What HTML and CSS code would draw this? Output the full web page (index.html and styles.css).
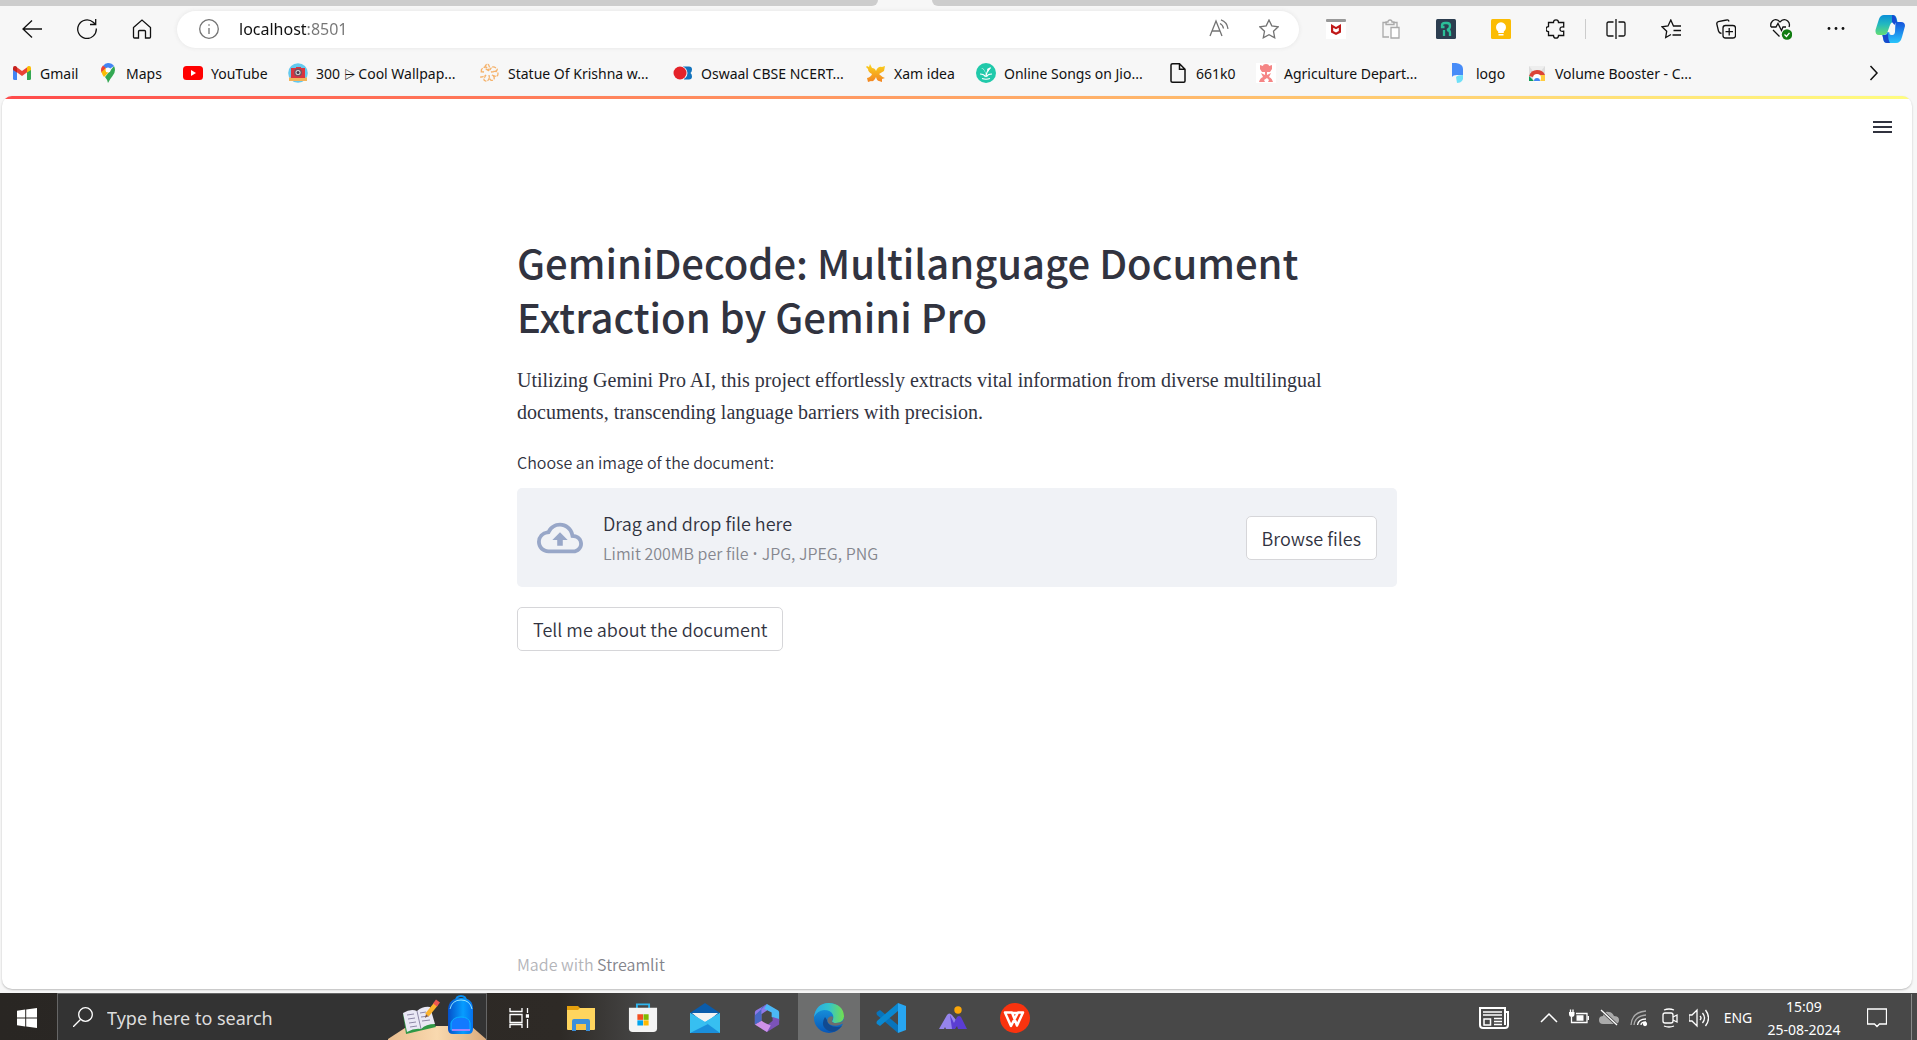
FILE: index.html
```html
<!DOCTYPE html>
<html lang="en">
<head>
<meta charset="utf-8">
<meta name="viewport" content="width=device-width, initial-scale=1">
<title>GeminiDecode</title>
<link rel="stylesheet" href="styles.css">
</head>
<body>
<header class="browser">
  <div class="tabstrip"><span class="tabs-left"></span><span class="tabs-right"></span></div>
  <nav class="toolbar" aria-label="Browser">
    <button class="tool" aria-label="Back"><svg class="i20" viewBox="0 0 20 20"><path d="M20 10H1M10 1.500L1 10l9 8.500"/></svg></button>
    <button class="tool" aria-label="Refresh"><svg class="i20" viewBox="0 0 20 20"><path d="M19.300 9.500A9.300 9.300 0 1 1 16.200 3.200L18.500 5.200M18.700 0V5.500H13"/></svg></button>
    <button class="tool" aria-label="Home"><svg class="i20" viewBox="0 0 20 20"><path d="M1.500 8.500L10 1l8.500 7.500V18a1 1 0 0 1-1 1H13.500V12.500q0-1-1-1h-5q-1 0-1 1V19h-4a1 1 0 0 1-1-1z"/></svg></button>
    <div class="address">
      <svg class="i20 muted" viewBox="0 0 20 20"><circle cx="10" cy="10" r="9.300"/><path d="M10 9v6M10 5.300v1.500"/></svg>
      <input class="url" type="text" aria-label="Address" value="localhost:8501">
      <button class="inner" aria-label="Read aloud"><svg class="i20 muted" viewBox="0 0 20 20"><path d="M1 17L7 2l6 15M3.300 12h7.500M11 4.500q3 1.500 3.500 5M12 .8q6 2 7 9"/></svg></button>
      <button class="inner" aria-label="Add to favorites"><svg class="i20 muted" viewBox="0 0 20 20"><path d="M10 1l2.800 5.900 6.400.9-4.700 4.500 1.200 6.500L10 15.700l-5.700 3.100 1.200-6.500L.8 7.800l6.400-.9z"/></svg></button>
    </div>
    <button class="tool first-ext" aria-label="McAfee"><svg class="i20 fill" viewBox="0 0 20 20"><path fill="#fff" d="M0 0h20v20H0z"/><rect width="20" height="3" rx="1" fill="#999"/><path fill="#c01818" d="M5 5l5 3 5-3v8.500L10 16l-5-2.500z"/><path fill="#fff" d="M7.200 8.700L10 10.200l2.800-1.500V12L10 13.500 7.200 12z"/></svg></button>
    <button class="tool" aria-label="Clipboard"><svg class="i20 pale" viewBox="0 0 20 20"><path d="M8 18H2V3.500h4M12 3.500h4V8M5 5.500V3h2q0-2 2-2t2 2h2v2.500z"/><path fill="#fff" d="M10 8.500h8V19h-8z"/></svg></button>
    <button class="tool" aria-label="R extension"><svg class="i20 fill" viewBox="0 0 20 20"><rect width="20" height="20" rx="1.500" fill="#2c3e50"/><path d="M8.500 8H6V6.500Q6 4 9 4h2q3 0 3 3t-3 4q3 0 3 3v3M8 11v6" fill="none" stroke="#2bbf98" stroke-width="2.300"/></svg></button>
    <button class="tool" aria-label="Keep"><svg class="i20 fill" viewBox="0 0 20 20"><rect width="20" height="20" rx="1.500" fill="#fbbc04"/><path fill="#fff" d="M7.200 12.500a5 5 0 1 1 5.600 0V14H7.200zM7.500 15h5v1.500h-5z"/></svg></button>
    <button class="tool" aria-label="Extensions"><svg class="i20" viewBox="0 0 20 20"><path d="M2.500 3.500h5Q7.500.8 10 .8t2.500 2.700h5.200V8q-3.700-.5-3.700 2.200t3.700 2V16.500h-5.200q0 2.700-2.500 2.700t-2.500-2.700h-5V12.700Q0 12.500 0 10.200T2.500 7.700z"/></svg></button>
    <span class="divider"></span>
    <button class="tool" aria-label="Split screen"><svg class="i20" viewBox="0 0 20 20"><path d="M7.500 17H2.500q-1.500 0-1.500-1.500v-11Q1 3 2.500 3h5M12.500 3h5Q19 3 19 4.500v11q0 1.500-1.500 1.500h-5M10 0v20"/></svg></button>
    <button class="tool" aria-label="Favorites"><svg class="i20" viewBox="0 0 20 20"><path d="M10 15.500l-5.300 3 1-6.300L1 7.800l6-.8 2.800-6L12.500 7H20M12.500 11.500H20M11.500 16H20"/></svg></button>
    <button class="tool" aria-label="Collections"><svg class="i20" viewBox="0 0 20 20"><path d="M5.500 14.500q-2.500-.5-3-2.500L.8 5Q.5 3.200 2.300 2.700L10.500 1q2-.5 2.500 1.500"/><rect x="7" y="6.500" width="12.500" height="12.500" rx="2.500"/><path d="M13.200 9v7.500M9.500 12.700H17"/></svg></button>
    <button class="tool" aria-label="Browser essentials"><svg class="i22" viewBox="0 0 22 22"><path d="M1 9Q0 5.500 2.500 3T8 2.300L10 4l2-1.700Q15 .5 17.700 3T19 9M1 9h5l2-3.500 3.500 7L13 9h3M3 12l6.500 6.500"/><circle cx="17" cy="16.500" r="5.200" fill="#107c10" stroke="none"/><path stroke="#fff" d="M14.500 16.500l2 2 3-3.700"/></svg></button>
    <button class="tool" aria-label="Settings and more"><svg class="i20 fill" viewBox="0 0 20 20"><circle cx="3" cy="9.500" r="1.400"/><circle cx="10" cy="9.500" r="1.400"/><circle cx="17" cy="9.500" r="1.400"/></svg></button>
    <button class="tool copilot" aria-label="Copilot"><svg class="i30 fill" viewBox="0 0 30 28"><defs><linearGradient id="ca" x1="0" y1="0" x2="0" y2="1"><stop stop-color="#0b8fd8"/><stop offset=".45" stop-color="#22b8c0"/><stop offset="1" stop-color="#64dd74"/></linearGradient><linearGradient id="cb" x1="0" y1="0" x2="0" y2="1"><stop stop-color="#1553dc"/><stop offset="1" stop-color="#28c5fb"/></linearGradient></defs><path fill="url(#ca)" d="M9 0h9q2.500 0 3.500 3l1 4H19q-3 0-4 3l-2.500 7q-1 3-4 3H4Q0 20 .5 15L4 4Q5.500 0 9 0z"/><path fill="url(#cb)" d="M20.500 7H26q4 0 4 4l-3 11q-1.500 6-6 6h-9q-3 0-3.500-3L7.300 20h2.200q2 0 3-3l2 .5q-.5 2.500 2 2.500h1q2 0 2.500-3z"/><path fill="#164bd3" d="M17 0q3 0 4 3l1 4q-2 .5-2.500 3L17 7z"/><path fill="#1949cb" d="M7.500 20h3q2 0 2.500-2 0 7 2 10h-3q-3 0-3.500-3z"/></svg></button>
  </nav>
  <nav class="bookmarks" aria-label="Bookmarks">
    <a href="#"><svg class="i20 fill" viewBox="0 0 20 20"><path fill="#4285f4" d="M1 6l4 3v8H2.500Q1 17 1 15.500z"/><path fill="#34a853" d="M19 6l-4 3v8h2.500q1.500 0 1.500-1.500z"/><path fill="#ea4335" d="M4.500 4L10 8l5.500-4v5L10 13 4.500 9z"/><path fill="#c5221f" d="M1 7V5q0-2.500 2.500-2L5 4v5.500z"/><path fill="#fbbc04" d="M19 7V5q0-2.500-2.500-2L15 4v5.500z"/></svg>Gmail</a>
    <a href="#"><svg class="i20 fill" viewBox="0 0 20 20"><path fill="#34a853" d="M17 7q0 3-2.500 6T10 20q-1-4-3-6L16 3q1 2 1 4z"/><path fill="#4285f4" d="M10 0q4 0 6 3L10 7 5 3q2-3 5-3z"/><path fill="#ea4335" d="M5 2.500L8 5l-4 5q-1-1-1-3 0-2.500 2-4.500z"/><path fill="#fbbc04" d="M3.500 9L8 5l3 4-5 5q-1.500-1.500-2.500-5z"/><circle cx="10" cy="7" r="2.500" fill="#fff"/></svg>Maps</a>
    <a href="#"><svg class="i20 fill" viewBox="0 0 20 20"><rect y="3" width="20" height="14" rx="3.500" fill="#f00"/><path fill="#fff" d="M8 7l5 3-5 3z"/></svg>YouTube</a>
    <a href="#"><svg class="i20 fill" viewBox="0 0 20 20"><circle cx="10" cy="10" r="9.800" fill="#64c9ee"/><path fill="#f2b35b" d="M1 14.500h18V18H1z"/><path fill="#d9343f" d="M3 5h5V4h5v1h4v10H3z"/><circle cx="10" cy="9.500" r="4" fill="#775260"/><circle cx="10" cy="9.500" r="2.500" fill="#ddd"/><circle cx="10" cy="9.500" r="1.500" fill="#44384c"/></svg><span>300 <span class="symbol">⩥</span> Cool Wallpap...</span></a>
    <a href="#"><svg class="i20" viewBox="0 0 20 20"><path stroke="#f5b26b" stroke-dasharray="4 1" d="M9 8Q3 5 6 2t4 5q2-5 6-2t-5 4q7-2 7 2t-6 1q4 3 1 5t-4-5q1 6-3 6t0-6q-6 4-7 0t5-3Q-1 8 3 5t6 3"/></svg>Statue Of Krishna w...</a>
    <a href="#"><svg class="i20 fill" viewBox="0 0 20 20"><path fill="#1273bd" d="M10 3.500h6q3 0 3 3 0 2-1.500 3.500Q19 11 19 13.500q0 3-3 3h-5z"/><ellipse cx="7" cy="10" rx="7.500" ry="7" fill="#f7f7f7"/><circle cx="7" cy="10" r="6.500" fill="#e42229"/></svg>Oswaal CBSE NCERT...</a>
    <a href="#"><svg class="i20 fill" viewBox="0 0 20 20"><defs><linearGradient id="xa" x2="0" y2="1"><stop stop-color="#fad51c"/><stop offset="1" stop-color="#f38423"/></linearGradient></defs><path fill="url(#xa)" d="M1 3l2 1 1-3 2 4q3 0 4 3 2-5 6-4l3-1-1 5-5 3q3 3 6 4l-3 1v3l-3-1q-2 0-3-4-2 5-5 4l-3 1-1-4q4-1 5-4Q2 9 2 6L0 4z"/></svg>Xam idea</a>
    <a href="#"><svg class="i20 fill" viewBox="0 0 20 20"><circle cx="10" cy="10" r="10" fill="#20c9aa"/><path fill="none" stroke="#fff" stroke-width="1.200" d="M10 13q1-6 4.500-8M9.500 14Q8 11 4 11M10.500 14q1-3 5.500-3M6 15.500q4 1.500 8 0"/><path fill="#fff" d="M5 5q4 1 5 8 0-5-3-7.500zM11 6l4-2-3 5z"/></svg>Online Songs on Jio...</a>
    <a href="#"><svg class="i20" viewBox="0 0 20 20"><path d="M4.500.8h7L17 6.300V18q0 1.200-1.200 1.200H4.500Q3 19.200 3 18V2Q3 .8 4.500.8zM11.500 1v5.300H17" stroke-width="1.500"/></svg>661k0</a>
    <a href="#"><svg class="i20 fill" viewBox="0 0 20 20"><path fill="#fff" d="M0 0h20v20H0z"/><path fill="#f58585" d="M4 2l3 1q0-2 3-2t3 2l3-1v4l-2 3h-3v3l4-2-2 4q3 1 4 5h-5l1-2-2-2-3 2 1 2H3q1-4 4-5l-2-4 4 2V9H6L4 6z"/></svg>Agriculture Depart...</a>
    <a href="#"><svg class="i20 fill" viewBox="0 0 20 20"><path fill="#478cf8" d="M4 0h4q7 1 7 6v6H9q-4 0-5 2z"/><path fill="#6fe0f8" d="M8 14q1-2 7-2 1 8-6 8z"/></svg>logo</a>
    <a href="#"><svg class="i20 fill" viewBox="0 0 20 20"><path fill="#ddd" d="M2 3h16v15H2z"/><path fill="#eee" d="M2 3h16L14 8H6z"/><path fill="#db4437" d="M2 13q2-6 8-6t8 5l-8 3z"/><path fill="#0f9d58" d="M2 13l5 5H2z"/><path fill="#ffcd40" d="M11 18l2-6h5v6z"/><circle cx="10" cy="15" r="4" fill="#fff"/><path fill="#4285f4" d="M7 18a3 3 0 1 1 6 0z"/></svg>Volume Booster - C...</a>
    <button class="more" aria-label="More bookmarks"><svg class="i20" viewBox="0 0 20 20"><path d="M6.500 3l6.500 7-6.500 7" stroke-width="1.500"/></svg></button>
  </nav>
</header>

<div class="viewport">
  <div class="page">
    <button class="menu" aria-label="Main menu"><span></span><span></span><span></span></button>
    <main class="content">
      <h1>GeminiDecode: Multilanguage Document Extraction by Gemini Pro</h1>
      <p class="intro">Utilizing Gemini Pro AI, this project effortlessly extracts vital information from diverse multilingual documents, transcending language barriers with precision.</p>
      <label class="field-label" for="file">Choose an image of the document:</label>
      <input class="file-input" id="file" type="file" accept=".jpg,.jpeg,.png">
      <section class="dropzone">
        <svg class="cloud" viewBox="0 0 24 24"><path d="M19.350 10.040A7.490 7.490 0 0 0 12 4C9.110 4 6.600 5.640 5.350 8.040A5.994 5.994 0 0 0 0 14c0 3.310 2.690 6 6 6h13c2.760 0 5-2.240 5-5 0-2.640-2.050-4.780-4.650-4.960zM19 18H6c-2.210 0-4-1.790-4-4 0-2.050 1.530-3.760 3.560-3.970l1.070-.110.500-.950A5.469 5.469 0 0 1 12 6c2.620 0 4.880 1.860 5.390 4.430l.300 1.500 1.530.110A2.980 2.980 0 0 1 22 15c0 1.650-1.350 3-3 3zM8 13h2.550v3h2.900v-3H16l-4-4z"/></svg>
        <div class="drop-text"><span>Drag and drop file here</span><small>Limit 200MB per file <span class="bullet">•</span> JPG, JPEG, PNG</small></div>
        <button class="btn">Browse files</button>
      </section>
      <button class="btn submit">Tell me about the document</button>
    </main>
    <footer class="credit">Made with <a href="#">Streamlit</a></footer>
  </div>
</div>

<div class="taskbar">
  <button class="start" aria-label="Start"><svg class="i20 fill" viewBox="0 0 20 20"><path fill="#fff" d="M0 2.700L8.200 1.500v8H0zM9.200 1.400L20 0v9.500H9.200zM0 10.500h8.200v8L0 17.300zM9.200 10.500H20V20L9.200 18.600z"/></svg></button>
  <div class="search">
    <svg class="i20 white" viewBox="0 0 20 20"><circle cx="12.500" cy="7.500" r="6.800"/><path d="M7.500 12.500L0 20"/></svg>
    <input type="text" aria-label="Search" placeholder="Type here to search">
    <svg class="art" viewBox="0 0 98 45"><defs><linearGradient id="bp"><stop stop-color="#044fc9"/><stop offset=".6" stop-color="#079dff"/><stop offset="1" stop-color="#0571ee"/></linearGradient><linearGradient id="ds"><stop stop-color="#e9bd8f"/><stop offset=".5" stop-color="#f9d9af"/><stop offset="1" stop-color="#dbab7c"/></linearGradient></defs><path fill="url(#ds)" d="M0 44L20 31h63l15 13v1H0z"/><path fill="#2f9846" d="M15 19l3 20 30-7-3-6z"/><path fill="#e9e8f5" d="M15 18q8-5 14-2 6-5 13-4l5 17q-9 0-14 5-7-1-14 3z"/><path fill="none" stroke="#8d88a7" d="M29 16l4 18M19 20l7-1M20 24l7-1M21 28l7-1M22 32l7-1M32 18l6-1M33 22l8-1M34 26l8-1"/><path stroke="#fbb32c" stroke-width="4.500" d="M39 20L48 9"/><path stroke="#ee5750" stroke-width="5" d="M47 10l3-4"/><path fill="#875738" d="M37 23l1-4 2 2z"/><path fill="none" stroke="#078ff2" stroke-width="2" d="M68 6q0-5 5-5t5 5"/><path fill="url(#bp)" d="M60 14Q61 3 73 3t12 11v20q0 5-5 5H65q-5 0-5-5z"/><path fill="none" stroke="#8fe3ff" d="M62 14q2-9 11-9t11 9"/><path fill="#127aff" stroke="#06b5ff" d="M63 35V28q2-6 10-6t9 6v7z"/><path stroke="#d17cff" stroke-width="1.500" d="M64 35h18"/></svg>
  </div>
  <div class="apps">
    <button aria-label="Task view"><svg class="i20 white" viewBox="0 0 20 20"><path d="M1 0v3.500h12V0M1 6.500h12v8H1zM1 20v-3.500h12V20M18.500 0v5M18.500 11v9"/><path fill="#fff" d="M17.500 7h2v2h-2z"/></svg></button>
    <button aria-label="File Explorer"><svg class="i28 fill" viewBox="0 0 28 28"><path fill="#e5a00d" d="M0 2h11l2 2v4H0z"/><path fill="#ffd55e" d="M0 6h11l2-2h15v21q0 1-1 1H1q-1 0-1-1z"/><path fill="#3b8fda" d="M5 27V17q0-2 2-2h14q2 0 2 2v10h-4v-7H9v7z"/><path fill="#f6c447" d="M9 20h10v6H9z"/></svg></button>
    <button aria-label="Store"><svg class="i30 fill" viewBox="0 0 30 32"><path fill="none" stroke="#2fb5ee" stroke-width="2" d="M8.500 7V1.500h13V7"/><path fill="#f4f4f4" d="M0 5h30v22q0 4-4 4H4q-4 0-4-4z"/><path fill="#f25022" d="M9 12h6v6H9z"/><path fill="#7fba00" d="M15.500 12h5.500v6h-5.500z"/><path fill="#00a4ef" d="M9 18.500h6V24H9z"/><path fill="#ffb900" d="M15.500 18.500H21V24h-5.500z"/></svg></button>
    <button aria-label="Mail"><svg class="i30 fill" viewBox="0 0 30 30"><path fill="#0a5cab" d="M0 10L15 0l15 10-15 10z"/><path fill="#f3f3f3" d="M2 10h26L15 21z"/><path fill="#37bff1" d="M0 10l15 9 15-9v20H0z"/><path fill="#37bff1" d="M15 19l15 11V10z"/><path fill="#1a8fdb" d="M0 30h30L15 19z"/><path fill="#37bff1" d="M0 30V10l15 9 3 2z"/></svg></button>
    <button aria-label="Microsoft 365"><svg class="i28 fill" viewBox="0 0 28 30"><path fill="#8f78e8" d="M14 0L2 7q-1 1-1 2v13l7-4v-7l6-4z"/><path fill="#4bb8f6" d="M14 0l12 7q1 1 1 2v9l-8-4V9l-8-4z"/><path fill="#7b53b8" d="M27 16v6l-13 8-5-3 11-9v-4z"/><path fill="#cf91e9" d="M1 22l7-4 5 3 5 2-4 7z"/><path fill="#4868c5" d="M14 0L8 4v14l-7 4V12z"/></svg></button>
    <button class="active" aria-label="Edge"><svg class="i30 fill" viewBox="0 0 30 30"><defs><linearGradient id="eg"><stop stop-color="#28a9e8"/><stop offset=".5" stop-color="#34c4cb"/><stop offset="1" stop-color="#74df4c"/></linearGradient><linearGradient id="eb" x2="0" y2="1"><stop stop-color="#1b9de2"/><stop offset="1" stop-color="#0756b8"/></linearGradient></defs><circle cx="15" cy="15" r="15" fill="url(#eb)"/><path fill="url(#eg)" d="M0 14Q2 0 15 0q14 1 15 13 0 7-8 7-4 0-4-2 2-2 1-6-2-5-9-5-7 1-10 7z"/><path fill="#114a91" d="M11 14q-5 8 2 13 7 5 15-4-2 1-5 1-9 0-10-7z"/><path fill="#6d6e6e" d="M14 15q-2 5 3 7 6 2 11-1l2-1v-4q-1 4-8 4-4 0-4-2 1-2 1-4-2-2-5 1z"/></svg></button>
    <button aria-label="Visual Studio Code"><svg class="i30 fill" viewBox="0 0 30 30"><path fill="#0874bc" d="M1 9l3-2 18 15v8L1 12q-1-2 0-3z"/><path fill="#0a88d1" d="M1 21l3 2L22 8V0L1 18q-1 2 0 3z"/><path fill="#27a6f2" d="M22 0l8 3v24l-8 3z"/></svg></button>
    <button aria-label="Mi"><svg class="i28 fill" viewBox="0 0 28 24"><path fill="#9584ec" d="M0 23L8 9q2-3 5 0l4 5-4 9H7l-1-2-1 2z"/><path fill="#5b3dd3" d="M11 9l4 8 3-6q2-2 4 0l6 12h-9l-1-3-2 3h-3z"/><circle cx="19" cy="4" r="3.700" fill="#fba608"/></svg></button>
    <button aria-label="WPS Office"><svg class="i30 fill" viewBox="0 0 30 30"><circle cx="15" cy="15" r="15" fill="#f9330f"/><path fill="none" stroke="#fff" stroke-width="2.500" stroke-linejoin="round" d="M5 9.500h7l5 13 6-13h-5L11 23zM13 10h5"/></svg></button>
  </div>
  <div class="tray">
    <button class="news" aria-label="News"><svg class="i30 white" viewBox="0 0 30 22"><path stroke-width="2" d="M26 5h3v13q0 3-3 3H4q-3 0-3-3V1h25v17"/><path stroke-width="1.500" d="M4 5h19M4 8h19M15 11.500h8M15 14.500h8M15 17.500h8M5 12h6.500v6H5z"/></svg></button>
    <button aria-label="Show hidden icons"><svg class="i20 white" viewBox="0 0 20 20"><path d="M2 14l8-8 8 8" stroke-width="1.500"/></svg></button>
    <button aria-label="Battery"><svg class="i20 white" viewBox="0 0 20 20"><path d="M5 14.500h13v-9H7M19.500 8v4M2.500 9v5.500h3M1.500 1.500V4M4 1.500V4"/><path fill="#fff" stroke="none" d="M0 4h5.500v2q0 3-2.700 3T0 6zM7.500 7.200h7v5.600h-7z"/></svg></button>
    <button aria-label="OneDrive"><svg class="i20 fill" viewBox="0 0 20 20"><path fill="#aaa" d="M4 16q-4 0-4-4t4-4q1-5 6-4 3 0 5 4 5 0 5 4t-4 4z"/><path stroke="#484848" stroke-width="3" d="M2 2l16 15"/><path stroke="#fff" d="M2 2l16 15"/></svg></button>
    <button aria-label="Network"><svg class="i20 white" viewBox="0 0 20 20"><path stroke="#aaa" d="M2 17Q3 4 17 3M5 17Q6 8 17 7"/><path d="M8.500 17q1-6 8.500-6M12 17q0-3 5-3"/><circle cx="16" cy="16" r="1.500" fill="#fff"/></svg></button>
    <button aria-label="Meet now"><svg class="i20 white" viewBox="0 0 20 20"><rect x="4" y="5" width="10" height="10" rx="2"/><path d="M14 9l4-2v7l-4-2M5 2q5-2 10 0M5 18q5 2 10 0"/></svg></button>
    <button aria-label="Volume"><svg class="i20 white" viewBox="0 0 20 20"><path d="M0 7h3l5-5v16l-5-5H0zM11 8q2 2 0 4M13.500 5q4 5 0 10M16.500 2q6 8 0 16"/></svg></button>
    <span class="lang">ENG</span>
    <time class="clock" datetime="2024-08-25T15:09"><span>15:09</span><span>25-08-2024</span></time>
    <button class="notify" aria-label="Notifications"><svg class="i20 white" viewBox="0 0 20 20"><path d="M.5 1h19v15h-7L10 18.500 7.500 16h-7z"/></svg></button>
  </div>
</div>
</body>
</html>
```

FILE: styles.css
```css
* { box-sizing: border-box; }

:root {
  --ui: "Noto Sans", "Open Sans", sans-serif;
  --app: "Noto Sans CJK SC", "Noto Sans", sans-serif;
  --ink: #31333f;
}

body {
  margin: 0;
  min-height: 100vh;
  display: flex;
  flex-direction: column;
  background: #f7f7f7;
  font-family: var(--ui);
  overflow-x: hidden;
}

button {
  font: inherit;
  color: inherit;
  border: 0;
  padding: 0;
  background: none;
}

a { color: inherit; text-decoration: none; }

svg { display: block; flex: none; fill: none; stroke: #111; stroke-width: 1.300; }
svg.fill { fill: #111; stroke: none; }
svg.muted { stroke: #737373; }
svg.pale { stroke: #aaa; }
svg.white { stroke: #fff; }
.i20 { width: 20px; height: 20px; }
.i22 { width: 22px; height: 22px; }
.i28 { width: 28px; height: 28px; }
.i30 { width: 30px; height: 30px; }

/* Browser chrome */
.tabstrip { display: flex; gap: 54px; height: 6px; }
.tabs-left { flex: 46 1 0; background: #cdcdcd; border-bottom-right-radius: 6px; }
.tabs-right { flex: 51.600 1 0; background: #cdcdcd; border-bottom-left-radius: 6px; }

.toolbar { display: flex; align-items: center; padding: 4px 1px 2px 4px; }
.tool { display: grid; place-items: center; width: 55px; height: 38px; flex: none; }
.copilot { width: 53px; }
.first-ext { margin-left: 9px; }
.divider { width: 1px; height: 20px; margin: 0 2px; background: #ccc; }

.address {
  flex: 1;
  display: flex;
  align-items: center;
  height: 37px;
  margin-left: 8px;
  padding: 0 20px 0 22px;
  border-radius: 19px;
  background: #fff;
  box-shadow: 0 0 4px #e4e4e4;
}
.url {
  flex: 1;
  min-width: 0;
  height: 30px;
  margin-left: 20px;
  padding: 0;
  border: 0;
  outline: 0;
  font: 16px/30px var(--ui);
  color: transparent;
  caret-color: #111;
  background: linear-gradient(90deg, #111 68px, #757575 68px);
  background-clip: text;
  -webkit-background-clip: text;
}
.inner { margin-left: 30px; }

.bookmarks {
  display: grid;
  grid-template-columns: 86px 85px 105px 192px 193px 193px 110px 192px 88px 192px 79px 1fr 86px;
  align-items: center;
  height: 46px;
  padding-left: 12px;
  font-size: 14px;
  color: #111;
}
.bookmarks a { display: flex; align-items: center; gap: 8px; white-space: nowrap; }
.symbol { font-family: "DejaVu Sans", sans-serif; }
.more { justify-self: center; }

/* Page frame */
.viewport { flex: 1; display: flex; padding: 0 5px 4px 2px; }
.page {
  flex: 1;
  display: flex;
  flex-direction: column;
  border-radius: 10px;
  background:
    linear-gradient(90deg, #ff4b4b, #fffd80) top / 100% 3px no-repeat,
    #fff;
  box-shadow: 0 1px 2px #bbb;
}

.menu {
  align-self: flex-end;
  display: flex;
  flex-direction: column;
  gap: 3px;
  margin: 25px 20px 0 0;
}
.menu span { width: 19px; height: 2px; background: var(--ink); }

.content, .credit {
  width: 100%;
  max-width: 880px;
  margin: 0 auto;
  font-family: var(--app);
  font-weight: 350;
  color: var(--ink);
}
.content { padding-top: 102px; }

h1 { margin: 0 0 21px; font-size: 40px; line-height: 54px; font-weight: 500; }

.intro {
  margin: 0 0 20px;
  font: 20px/32px "Liberation Serif", serif;
}

.field-label { display: block; margin-bottom: 12px; font-size: 16px; line-height: 28px; }
.file-input { position: absolute; width: 1px; height: 1px; opacity: 0; }

.dropzone {
  display: flex;
  align-items: center;
  gap: 20px;
  min-height: 99px;
  padding: 19px 20px;
  border-radius: 5px;
  background: #f0f2f6;
}
.cloud { width: 46px; height: 46px; fill: #98a7c8; stroke: none; }
.drop-text { flex: 1; display: flex; flex-direction: column; font-size: 18px; line-height: 32px; }
.drop-text small { font-size: 16px; line-height: 28px; color: #85878f; }
.bullet { font-family: "Open Sans", sans-serif; }

.btn {
  height: 44px;
  padding: 0 15px;
  border: 1px solid #d6d6d9;
  border-radius: 5px;
  background: #fff;
  font-size: 18px;
}
.submit { margin-top: 20px; }

.credit { margin-top: auto; padding-bottom: 13px; font-size: 16px; line-height: 24px; color: #b3b4b9; }
.credit a { color: #83848c; }

/* Taskbar */
.taskbar {
  display: flex;
  height: 47px;
  padding-right: 5px;
  background: linear-gradient(90deg, #292623 0, #2e2a26 560px, #484848 650px);
  color: #fff;
}
.taskbar button { display: grid; place-items: center; }
.start { width: 57px; padding-right: 3px; }
.start, .tray { padding-top: 2px; }

.search {
  display: flex;
  align-items: center;
  width: 430px;
  padding-left: 15px;
  border: 1px solid #666;
  border-bottom: 0;
  background: #333;
}
.search input {
  flex: 1;
  min-width: 0;
  margin-left: 14px;
  padding: 2px 0 0;
  border: 0;
  outline: 0;
  background: none;
  font: 18px/24px var(--ui);
  color: #fff;
}
.search input::placeholder { color: #ddd; }
.art { width: 98px; height: 45px; align-self: flex-end; stroke-width: 1; stroke: none; }

.apps { display: flex; flex: 1; padding-left: 1px; }
.apps button { width: 62px; padding-top: 2px; }
.apps .active { background: #6d6e6e; }

.tray { display: flex; align-items: center; }
.tray button { width: 30px; height: 44px; }
.tray .news { width: 50px; margin-right: 15px; }
.lang { width: 48px; text-align: center; font-size: 14px; }
.clock { display: flex; flex-direction: column; width: 84px; text-align: center; font-size: 14px; line-height: 23px; }
.tray .notify { width: 66px; height: 47px; padding-right: 4px; border-right: 1px solid #888; }
```
